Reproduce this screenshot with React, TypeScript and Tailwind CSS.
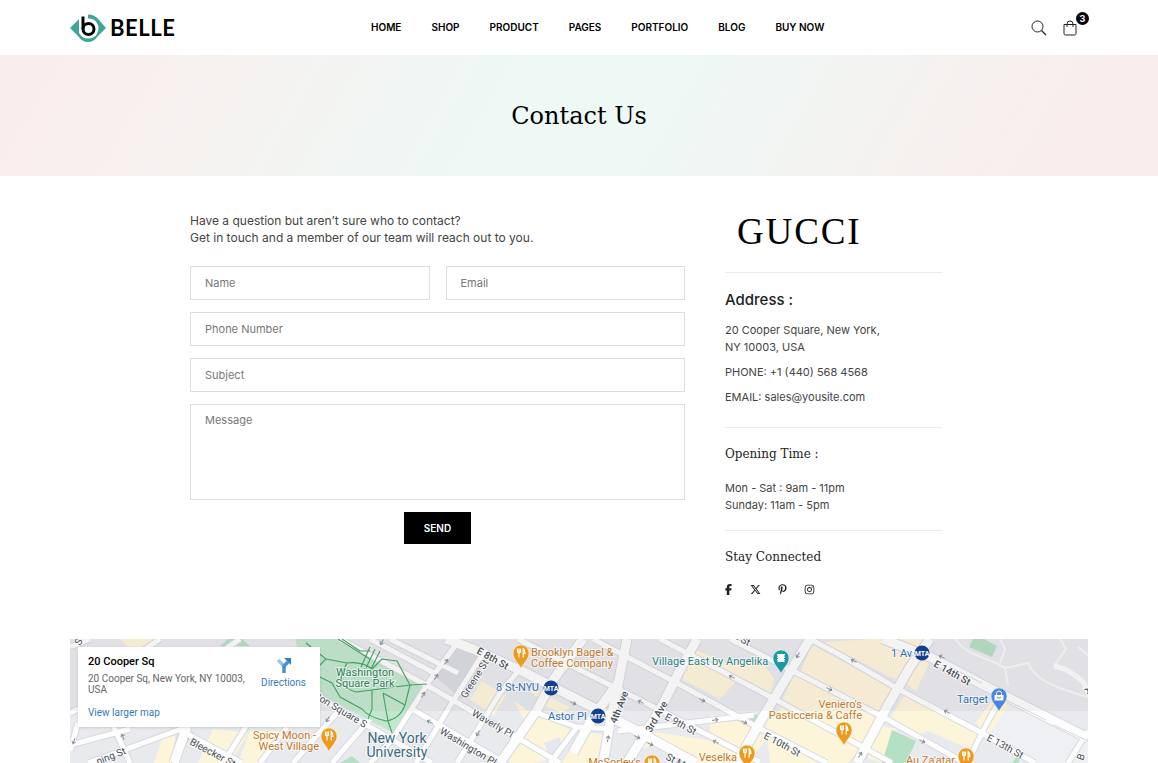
import type { ReactNode } from 'react';
import { FaFacebookF, FaInstagram, FaPinterestP, FaXTwitter } from 'react-icons/fa6';

const navItems = ['HOME', 'SHOP', 'PRODUCT', 'PAGES', 'PORTFOLIO', 'BLOG', 'BUY NOW'];

const narrowStreets = [
  'M270 0L360 48L443 96L490 124',
  'M340 69L435 124',
  'M236 50L300 88L362 124',
  'M300 0L366 35',
  'M320 0L388 34',
  'M448 0L510 31L570 61L690 123',
  'M523 0L607 44L687 88L757 124',
  'M590 0L663 38L710 63L822 124',
  'M660 0L727 34L813 78L895 124',
  'M740 0L770 16L830 51L910 93L965 124',
  'M300 124L322 101L360 41L390 0',
  'M262 124L300 80',
  'M346 124L383 62L416 10',
  'M387 124L430 54L450 30',
  'M480 124L507 88L467 74',
  'M507 88L543 90',
  'M548 92L600 86L684 76',
  'M0 74L12 68',
  'M0 106L60 90',
  'M18 124L117 88',
  'M43 86L60 124',
  'M108 90L172 124',
  'M153 124L177 86',
  'M190 124L217 88',
  'M223 124L272 68',
  'M0 112L8 84',
  'M60 20L90 0',
  'M150 14L170 0',
  'M0 8L20 0',
  'M897 124L917 84L934 54',
  'M998 124L1018 92',
];

const wideStreets = [
  'M376 0L403 10L450 31L530 72L626 124',
  'M430 124L467 71L483 41L513 0',
  'M533 124L540 84L548 46L557 0',
  'M548 44L523 78L503 114',
  'M557 124L590 71L610 31L627 0',
  'M667 124L693 78L723 28L740 0',
  'M787 124L817 68L840 28L860 0',
  'M104 124L118 84',
  'M813 0L860 18L923 51L1018 99',
];

const shops = [
  '143,90 178,94 160,124 128,124',
  '180,92 212,92 192,124 168,124',
  '400,60 412,42 436,56 424,76',
  '444,62 462,50 500,68 492,74 474,66 458,88',
  '434,110 466,76 500,90 484,120 464,124 440,124',
  '492,124 512,92 534,96 530,124',
  '562,112 580,92 656,104 690,124 620,124 598,104',
  '612,40 624,10 656,24 690,20 704,40 700,56 668,40 650,60',
  '640,76 690,78 700,96 684,116 640,94',
  '742,4 800,0 854,0 832,44 770,12',
  '730,34 742,6 824,50 812,74',
  '696,84 712,68 790,110 778,124 700,124',
  '724,36 808,80 790,106 712,62',
  '820,80 834,56 880,80 912,94 900,110 858,92 848,96',
  '906,84 926,56 940,64 918,98',
  '798,120 808,86 826,90 814,124',
  '836,44 846,18 860,22 846,52',
  '50,0 92,0 82,12 62,12',
  '92,100 105,96 102,124 84,124',
];

const arrows: [number, number, number][] = [
  [312, 3, 120],
  [360, 83, 208],
  [376, 23, -58],
  [366, 38, -58],
  [353, 56, -58],
  [503, 64, 28],
  [258, 80, 120],
  [408, 94, 120],
  [571, 63, 208],
  [632, 61, 28],
  [662, 38, 208],
  [645, 81, -8],
  [674, 83, 28],
  [646, 103, 208],
  [567, 98, 28],
  [580, 105, 28],
  [728, 16, 120],
  [784, 22, 208],
  [759, 50, 28],
  [872, 18, 208],
  [877, 73, 208],
  [852, 102, 28],
  [538, 100, -80],
  [790, 116, -60],
  [53, 98, -110],
  [4, 102, 110],
];

function Arrow({ x, y, angle }: { x: number; y: number; angle: number }) {
  return (
    <path
      d="M-3 0H3M0.5 -2L3 0L0.5 2"
      transform={`translate(${x} ${y}) rotate(${angle})`}
      fill="none"
      stroke="#8b9097"
      strokeWidth="1"
    />
  );
}

function Pin({ x, y, color, children }: { x: number; y: number; color: string; children: ReactNode }) {
  return (
    <g transform={`translate(${x} ${y})`}>
      <path
        d="M0 16C-1 11 -8 7 -8 0A8 8 0 0 1 8 0C8 7 1 11 0 16Z"
        fill={color}
        stroke="#ffffff"
        strokeOpacity="0.5"
      />
      {children}
    </g>
  );
}

function FoodPin({ x, y }: { x: number; y: number }) {
  return (
    <Pin x={x} y={y} color="#ee9a1c">
      <path
        d="M-3.5 -4.5V-1.5Q-3.5 0 -2 0Q-0.5 0 -0.5 -1.5V-4.5M-2 -4.5V4.5M2.2 4.5V-4.5Q4 -3 4 0.5H2.2"
        fill="none"
        stroke="#fff"
        strokeWidth="1.2"
      />
    </Pin>
  );
}

function Subway({ x, y }: { x: number; y: number }) {
  return (
    <g>
      <circle cx={x} cy={y} r="7.5" fill="#12408f" />
      <text x={x} y={y + 3} textAnchor="middle" fontSize="7" fontWeight="700" fill="#fff">
        MTA
      </text>
    </g>
  );
}

function MapDrawing() {
  return (
    <svg
      viewBox="0 0 1018 124"
      preserveAspectRatio="xMidYMid slice"
      className="block size-full font-['Roboto',sans-serif]"
      role="img"
      aria-label="Map around 20 Cooper Sq"
    >
      <rect width="1018" height="124" fill="#e9eaee" />
      <path d="M860 22L923 56L940 64L1018 104V124H965L912 94L930 62Z" fill="#eff0f3" />
      {shops.map((points) => (
        <polygon key={points} points={points} fill="#fdf5da" />
      ))}
      <path d="M363 36L392 4L418 16L392 60Z" fill="#d9dbe1" />
      <path d="M440 58L456 50L470 60L458 72ZM474 104L490 98L492 112L480 118Z" fill="#e3e8f0" />

      <path d="M225 0H268L357 47L326 95L300 82L240 50Z" fill="#c2e6ce" />
      <path d="M158 0H172L180 7H150Z" fill="#b5e0c4" />
      <path d="M108 93H124L112 112L106 124H101Z" fill="#b5e0c4" />
      <path d="M664 80L690 75L686 91Z" fill="#b5e0c4" />
      <path d="M822 91L846 102L836 124H812Z" fill="#b5e0c4" />
      <path d="M903 0H914L927 7L922 18L899 8Z" fill="#b5e0c4" />
      <path d="M946 118L951 119L948 124H942Z" fill="#b5e0c4" />
      <path d="M270 124L282 117L290 124ZM328 92L318 124" fill="#b5e0c4" />

      <g fill="none" strokeLinejoin="round">
        {narrowStreets.map((d) => (
          <path key={d} d={d} stroke="#d6d9df" strokeWidth="7" />
        ))}
        {wideStreets.map((d) => (
          <path key={d} d={d} stroke="#d6d9df" strokeWidth="11" />
        ))}
        {narrowStreets.map((d) => (
          <path key={d} d={d} stroke="#fdfdfe" strokeWidth="5" />
        ))}
        {wideStreets.map((d) => (
          <path key={d} d={d} stroke="#fdfdfe" strokeWidth="9" />
        ))}
        <path d="M880 28L912 44M932 59L976 81M984 86L1018 102" stroke="#d6d9df" strokeWidth="1" />
        <path
          d="M885 0C895 14 912 18 924 23L935 29L958 24L962 31C972 44 990 50 1018 58M935 29L938 46M930 0L935 10L930 24M990 0L996 10L984 27M1008 8L1018 16"
          stroke="#f7f7f9"
          strokeWidth="2"
        />
        <path d="M984 27Q1000 30 1014 44L1018 54" stroke="#fafafc" strokeWidth="5" />
        <path
          d="M236 4L256 20L277 24Q292 22 302 30L312 20L327 22L340 46L335 66Q330 80 316 82Q298 78 292 70L270 58M256 20L246 30M250 38L262 44L270 58M277 24L272 34Q268 48 286 53L302 51L302 70L298 80M302 51L340 46L357 45M313 54L335 66M313 54L318 82L322 94M291 28L300 8M296 29L305 10M301 30L310 12M268 0L300 20M272 0L290 12H300"
          stroke="#3fa562"
          strokeWidth="1.1"
        />
      </g>

      {arrows.map(([x, y, angle]) => (
        <Arrow key={`${x}-${y}`} x={x} y={y} angle={angle} />
      ))}

      <rect width="1018" height="72" fill="#5f5a55" fillOpacity="0.06" />

      <g fontSize="10" fill="#4b5057" stroke="#ffffff" strokeWidth="2" strokeOpacity="0.7" paintOrder="stroke">
        <text transform="translate(406 14) rotate(29)" fontWeight="500">E 8th St</text>
        <text transform="translate(396 60) rotate(-58)">Greene St</text>
        <text transform="translate(401 76) rotate(30)">Waverly Pl</text>
        <text transform="translate(369 94) rotate(31)">Washington Pl</text>
        <text transform="translate(246 60) rotate(31)">ton Square S</text>
        <text transform="translate(119 105) rotate(28)">Bleecker St</text>
        <text transform="translate(28 126) rotate(-22)">ning St</text>
        <text transform="translate(10 7) rotate(-60)">S</text>
        <text transform="translate(546 85) rotate(-68)" fontWeight="500">4th Ave</text>
        <text transform="translate(581 94) rotate(-60)" fontWeight="500">3rd Ave</text>
        <text transform="translate(594 80) rotate(28)">E 9th St</text>
        <text transform="translate(595 120) rotate(28)">St Marks Pl</text>
        <text transform="translate(663 -1) rotate(28)">h St</text>
        <text transform="translate(693 99) rotate(28)">E 10th St</text>
        <text transform="translate(863 27) rotate(29)" fontWeight="500">E 14th St</text>
        <text transform="translate(916 101) rotate(28)">E 13th St</text>
        <text transform="translate(1013 122) rotate(-70)">B</text>
        <text transform="translate(1014 50) rotate(60)">A</text>
      </g>

      <g fontSize="11" stroke="#ffffff" strokeWidth="2" strokeOpacity="0.6" paintOrder="stroke">
        <g fill="#34805a" textAnchor="middle">
          <text x="295" y="37">Washington</text>
          <text x="295" y="48">Square Park</text>
        </g>
        <g fill="#3b6b7c" textAnchor="middle" fontSize="14">
          <text x="327" y="104">New York</text>
          <text x="327" y="118">University</text>
        </g>
        <g fill="#c07a2c">
          <text x="461" y="17">Brooklyn Bagel &amp;</text>
          <text x="461" y="28">Coffee Company</text>
          <text x="246" y="100" textAnchor="end">Spicy Moon -</text>
          <text x="249" y="111" textAnchor="end">West Village</text>
          <text x="792" y="69" textAnchor="end">Veniero's</text>
          <text x="792" y="80" textAnchor="end">Pasticceria &amp; Caffe</text>
          <text x="667" y="122" textAnchor="end">Veselka</text>
          <text x="571" y="127" textAnchor="end">McSorley's</text>
          <text x="885" y="125" textAnchor="end">Au Za'atar</text>
        </g>
        <g fill="#356fae">
          <text x="426" y="52">8 St-NYU</text>
          <text x="478" y="81">Astor Pl</text>
          <text x="821" y="18">1 Av</text>
          <text x="887" y="64">Target</text>
        </g>
        <text x="582" y="26" fill="#2a8288">Village East by Angelika</text>
      </g>

      <FoodPin x={451} y={14} />
      <FoodPin x={259} y={97} />
      <FoodPin x={774} y={91} />
      <FoodPin x={677} y={114} />
      <FoodPin x={582} y={124} />
      <FoodPin x={896} y={117} />
      <Subway x={481} y={49} />
      <Subway x={528} y={77} />
      <Subway x={852} y={14} />
      <Pin x={711} y={19} color="#1a9aa5">
        <path d="M-3 -4H3V4H-3Z" fill="#fff" />
        <path d="M-3.5 -4V4M3.5 -4V4" stroke="#fff" strokeDasharray="1.5 1" />
      </Pin>
      <Pin x={929} y={57} color="#4a86e0">
        <path d="M-4.5 -1H4.5V4.5H-4.5Z" fill="#fff" />
        <path d="M-2.5 -1V-2.5A2.5 2.5 0 0 1 2.5 -2.5V-1" fill="none" stroke="#fff" />
        <path d="M-2 1Q0 3.5 2 1" fill="none" stroke="#4a86e0" />
      </Pin>
    </svg>
  );
}

function Logo() {
  return (
    <a href="#" className="flex items-center gap-1" aria-label="Belle">
      <svg viewBox="0 0 36 28" className="h-7 w-9">
        <path
          d="M0 14L9 5V19Q12 24.500 18 24.500Q24 24.500 27 20Q30 14 27 9Q24 4 18 4.500V0.500Q25 0.500 29 6L36 14L28 22Q24 28 18 28Q12 28 8 22Z"
          fill="#3fa597"
        />
        <path d="M13 2.500V15" stroke="#000" strokeWidth="3" fill="none" />
        <circle cx="18.500" cy="15" r="5.500" stroke="#000" strokeWidth="3" fill="none" />
      </svg>
      <span className="font-['Lato',sans-serif] text-[22px] leading-7 font-bold tracking-wide text-black">BELLE</span>
    </a>
  );
}

function Field({ id, label, type = 'text' }: { id: string; label: string; type?: string }) {
  return (
    <input
      id={id}
      name={id}
      type={type}
      aria-label={label}
      placeholder={label}
      className="block h-[34px] w-full border border-[#dedede] px-3.5 text-[11px] placeholder:text-[#777]"
    />
  );
}

export default function App() {
  return (
    <div className="bg-white font-['Inter',sans-serif] text-[11px] leading-[17px] text-[#444]">
      <header className="mx-auto flex h-[55px] max-w-[1158px] items-center px-[70px]">
        <div className="w-[301px]">
          <Logo />
        </div>
        <nav className="flex gap-[30px] text-[10px] font-semibold text-black">
          {navItems.map((item) => (
            <a key={item} href="#">
              {item}
            </a>
          ))}
        </nav>
        <div className="ml-auto flex items-center gap-4 pr-[11px]">
          <button type="button" aria-label="Search">
            <svg viewBox="0 0 16 16" className="size-4" fill="none" stroke="#222">
              <circle cx="6.500" cy="6.500" r="5.500" />
              <path d="M10.500 10.500L15 15" strokeWidth="1.300" />
            </svg>
          </button>
          <button type="button" aria-label="Cart" className="relative">
            <svg viewBox="0 0 14 16" className="h-4 w-3.5" fill="none" stroke="#222">
              <path d="M1 4.500H13V13.500Q13 15 11.500 15H2.500Q1 15 1 13.500Z" />
              <path d="M4 7V4A3 3 0 0 1 10 4V7" />
            </svg>
            <span className="absolute -top-2 -right-3 flex size-[13px] items-center justify-center rounded-full bg-black text-[9px] font-bold text-white">
              3
            </span>
          </button>
        </div>
      </header>

      <section className="flex h-[121px] items-center justify-center bg-[linear-gradient(120deg,#faeeed_5%,#eef8f5_44%,#eef8f5_56%,#f9edec_92%)]">
        <h1 className="font-['Roboto_Slab','DejaVu_Serif',serif] text-2xl text-black">Contact Us</h1>
      </section>

      <main>
        <div className="mx-auto grid max-w-[778px] grid-cols-[1fr_243px] gap-10 pt-9">
          <div>
            <p className="text-xs leading-[17px]">
              Have a question but aren’t sure who to contact?
              <br />
              Get in touch and a member of our team will reach out to you.
            </p>
            <form className="mt-5 flex flex-col gap-3">
              <div className="grid grid-cols-2 gap-4">
                <Field id="name" label="Name" />
                <Field id="email" label="Email" type="email" />
              </div>
              <Field id="phone" label="Phone Number" type="tel" />
              <Field id="subject" label="Subject" />
              <textarea
                id="message"
                name="message"
                aria-label="Message"
                placeholder="Message"
                className="block h-24 w-full resize-none border border-[#dedede] px-3.5 py-[7px] text-[11px] placeholder:text-[#777]"
              />
              <button type="submit" className="h-8 w-[67px] self-center bg-black text-[10px] font-semibold text-white">
                SEND
              </button>
            </form>
          </div>

          <aside className="pr-[26px]">
            <div className="border-b border-[#ebebeb] pb-5 pl-3 font-['Liberation_Serif',serif] text-[37px] leading-10 tracking-wider text-black">
              GUCCI
            </div>
            <div className="border-b border-[#ebebeb] pt-[17px] pb-[21px]">
              <h2 className="text-[15px] leading-5 font-medium text-[#222]">Address :</h2>
              <p className="mt-3">
                20 Cooper Square, New York,
                <br />
                NY 10003, USA
              </p>
              <p className="mt-2">PHONE: +1 (440) 568 4568</p>
              <p className="mt-2">EMAIL: sales@yousite.com</p>
            </div>
            <div className="border-b border-[#ebebeb] py-4">
              <h2 className="font-['Roboto_Slab','DejaVu_Serif',serif] text-xs leading-5 text-[#222]">
                Opening Time :
              </h2>
              <p className="mt-4">
                Mon - Sat : 9am - 11pm
                <br />
                Sunday: 11am - 5pm
              </p>
            </div>
            <div className="pt-4">
              <h2 className="font-['Roboto_Slab','DejaVu_Serif',serif] text-xs leading-5 text-[#222]">
                Stay Connected
              </h2>
              <div className="mt-[17px] -ml-0.5 flex items-center gap-4 text-[11px] text-[#222]">
                <a href="#" aria-label="Facebook">
                  <FaFacebookF />
                </a>
                <a href="#" aria-label="X">
                  <FaXTwitter />
                </a>
                <a href="#" aria-label="Pinterest">
                  <FaPinterestP />
                </a>
                <a href="#" aria-label="Instagram">
                  <FaInstagram />
                </a>
              </div>
            </div>
          </aside>
        </div>

        <div className="mx-auto mt-11 max-w-[1158px] px-[70px]">
          <section className="relative h-31 overflow-hidden">
            <MapDrawing />
            <div className="absolute top-2 left-2 flex h-20 w-[242px] justify-between bg-white px-2.5 py-2 font-['Roboto',sans-serif] text-[10px] leading-[11px] text-[#666] shadow">
              <div className="w-[164px]">
                <h3 className="text-[11px] leading-[14px] font-medium text-black">20 Cooper Sq</h3>
                <p className="mt-1">20 Cooper Sq, New York, NY 10003, USA</p>
                <a href="#" className="mt-3 block text-[#3a7ab5]">
                  View larger map
                </a>
              </div>
              <a href="#" className="flex flex-col items-center gap-1 px-1 pt-0.5 text-[#3a7ab5]">
                <svg viewBox="0 0 16 16" className="size-4" fill="none" strokeWidth="3.500">
                  <path d="M2 3L8 9" stroke="#9cc3ea" />
                  <path d="M8 16V9L12 5" stroke="#4a8fd0" />
                  <path d="M8 1H15V8Z" fill="#3b7dbd" />
                </svg>
                Directions
              </a>
            </div>
          </section>
        </div>
      </main>
    </div>
  );
}
